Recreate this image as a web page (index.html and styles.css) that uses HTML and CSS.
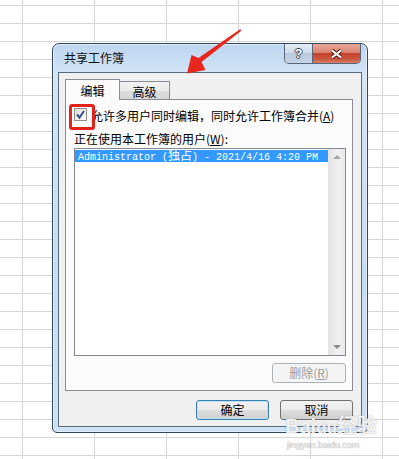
FILE: index.html
```html
<!DOCTYPE html>
<html lang="zh-CN">
  <head>
    <meta charset="UTF-8" />
    <meta name="viewport" content="width=device-width, initial-scale=1.0" />
    <title>共享工作簿</title>
    <link rel="stylesheet" href="styles.css">
  </head>
  <body>
    <div class="dialog">
      <div class="titlebar">
        <span class="title">共享工作簿</span>
        <div class="caption-btns">
          <span class="cap-btn help">?</span>
          <span class="cap-btn close">
            <svg width="13" height="10" viewBox="0 0 13 10">
              <path d="M2 1.5 L11 8.5 M11 1.5 L2 8.5" stroke="#4a1d16" stroke-width="4" fill="none" />
              <path d="M2 1.5 L11 8.5 M11 1.5 L2 8.5" stroke="#fff" stroke-width="2.2" fill="none" />
            </svg>
          </span>
        </div>
      </div>
      <div class="client">
        <ul class="tabs">
          <li class="tab active">编辑</li>
          <li class="tab">高级</li>
        </ul>
        <div class="panel">
          <div class="check-row">
            <span class="checkbox">
              <svg width="11" height="11" viewBox="0 0 11 11">
                <path d="M2 5.5 L4.5 8.5 L9 2" stroke="#3b4f8a" stroke-width="2" fill="none" />
              </svg>
            </span>
            <span class="check-label">允许多用户同时编辑，同时允许工作簿合并(<u>A</u>)</span>
            <span class="mark"></span>
          </div>
          <div class="list-label">正在使用本工作簿的用户(<u>W</u>):</div>
          <div class="listbox">
            <div class="rows">
              <div class="row selected">Administrator (<span class="cjk">独占</span>) - 2021/4/16 4:20 PM</div>
            </div>
            <div class="scrollbar">
              <span class="arrow up"></span>
              <span class="arrow down"></span>
            </div>
          </div>
          <div class="panel-actions">
            <button class="btn" disabled>删除(<u>R</u>)</button>
          </div>
        </div>
        <div class="actions">
          <button class="btn default">确定</button>
          <button class="btn">取消</button>
        </div>
      </div>
    </div>

    <svg class="note-arrow" width="70" height="60" viewBox="180 20 70 60">
      <polygon points="240.1,29.2 241.3,30.8 201.5,62 205.5,70 187,73.5 191.5,55 198.5,58" fill="#e8261e" />
    </svg>

    <div class="watermark">
      <span class="wm-logo">Bai<span class="paw">du</span>经验</span>
      <span class="wm-url">jingyan.baidu.com</span>
    </div>
  </body>
</html>
```

FILE: styles.css
```css
ul {
  margin: 0;
  padding: 0;
  list-style: none;
}
body {
  margin: 0;
  padding: 43px 0 0 52px;
  height: 459px;
  box-sizing: border-box;
  overflow: hidden;
  position: relative;
  font-family: "Noto Sans CJK SC", sans-serif;
  font-size: 12px;
  color: #000;
  background-color: #fff;
  background-image: linear-gradient(to right, #d6d6d6 1px, transparent 1px),
    linear-gradient(#d6d6d6 1px, transparent 1px);
  background-size: 72px 18px;
  background-position: 22px 5px;
}
u {
  text-decoration: underline;
}

/* window frame */
.dialog {
  width: 316px;
  height: 390px;
  box-sizing: border-box;
  border: 1px solid #34465a;
  border-radius: 7px 7px 5px 5px;
  padding: 0 5px 5px;
  display: flex;
  flex-direction: column;
  background: linear-gradient(#bcd5ef, #d3e4f6 30px, #c6dcf2 60%, #cde0f5);
  box-shadow: inset 0 0 0 1px #e3eef9;
}
.titlebar {
  height: 28px;
  display: flex;
  align-items: flex-start;
}
.titlebar .title {
  padding-left: 6px;
  line-height: 28px;
  font-size: 12px;
  color: #111;
}
.caption-btns {
  margin-left: auto;
  margin-right: 1px;
  display: flex;
  height: 19px;
  border: 1px solid #58667a;
  border-top: none;
  border-radius: 0 0 5px 5px;
  overflow: hidden;
}
.cap-btn {
  display: flex;
  align-items: center;
  justify-content: center;
}
.cap-btn.help {
  width: 27px;
  border-right: 1px solid #58667a;
  background: linear-gradient(#e6eef7, #d0dcea 45%, #b9c9dc 50%, #c6d4e4);
  font: bold 13px "Liberation Sans", sans-serif;
  color: #fff;
  text-shadow: 1px 0 #3a4556, -1px 0 #3a4556, 0 1px #3a4556, 0 -1px #3a4556;
}
.cap-btn.close {
  width: 47px;
  background: linear-gradient(#e9a99b, #d9826f 45%, #c5432f 50%, #c9563f 80%, #d77f69);
}

/* client area */
.client {
  flex: 1;
  border: 1px solid #5b6b7e;
  background: #f0f0f0;
  padding: 6px 8px 0 6px;
}
.tabs {
  display: flex;
  align-items: flex-end;
  height: 21px;
  position: relative;
  z-index: 1;
  margin-bottom: -1px;
}
.tab {
  box-sizing: border-box;
  border: 1px solid #898c95;
  border-bottom: none;
  text-align: center;
}
.tab.active {
  width: 55px;
  height: 21px;
  line-height: 21px;
  background: #fbfbfb;
}
.tab:not(.active) {
  width: 50px;
  height: 18px;
  line-height: 19px;
  margin-bottom: 1px;
  border-left: none;
  background: linear-gradient(#f2f2f2, #ebebeb 50%, #dddddd 51%, #d6d6d6);
}
.panel {
  width: 288px;
  height: 292px;
  box-sizing: border-box;
  border: 1px solid #898c95;
  background: #fbfbfb;
  padding: 7px 6px 0 7px;
}
.check-row {
  position: relative;
  display: flex;
  align-items: center;
  height: 14px;
  margin-left: 1px;
}
.checkbox {
  width: 13px;
  height: 13px;
  box-sizing: border-box;
  border: 1px solid #8e8f8f;
  background: linear-gradient(135deg, #dcdcdc, #fefefe);
  display: flex;
  align-items: center;
  justify-content: center;
}
.check-label {
  margin-left: 4px;
  line-height: 14px;
  margin-top: 3px;
}
.mark {
  position: absolute;
  left: -5px;
  top: -3px;
  width: 26px;
  height: 26px;
  box-sizing: border-box;
  border: 3px solid #e2231c;
  border-radius: 3px;
}
.list-label {
  margin: 11px 0 0 1px;
  line-height: 14px;
}

/* list of users */
.listbox {
  margin: 2px 0 0 1px;
  width: 272px;
  height: 208px;
  box-sizing: border-box;
  border: 1px solid #828790;
  background: #fff;
  display: flex;
}
.rows {
  flex: 1;
  padding-top: 1px;
}
.row {
  height: 12px;
  padding-left: 3px;
  font: 10px/12px "Liberation Mono", monospace;
  white-space: nowrap;
}
.row .cjk {
  font-family: "Noto Sans CJK SC", sans-serif;
  font-size: 12px;
  line-height: 10px;
}
.row.selected {
  background: #3399ff;
  color: #fff;
}
.scrollbar {
  width: 17px;
  display: flex;
  flex-direction: column;
  justify-content: space-between;
  align-items: center;
  background: linear-gradient(to right, #e4e4e4, #f0f0f0 60%, #e9e9e9);
  padding: 6px 0;
}
.arrow {
  width: 0;
  height: 0;
  border-left: 4px solid transparent;
  border-right: 4px solid transparent;
}
.arrow.up {
  border-bottom: 4px solid #a8a8a8;
}
.arrow.down {
  border-top: 4px solid #8a8a8a;
}
.panel-actions {
  display: flex;
  justify-content: flex-end;
  margin-top: 7px;
}

/* buttons */
.btn {
  width: 73px;
  height: 20px;
  box-sizing: border-box;
  border: 1px solid #707070;
  border-radius: 3px;
  padding: 0;
  font-family: "Noto Sans CJK SC", sans-serif;
  font-size: 12px;
  line-height: 18px;
  color: #000;
  background: linear-gradient(#f2f2f2, #ebebeb 50%, #dddddd 51%, #cfcfcf);
}
.btn:disabled {
  width: 74px;
  border-color: #adb2b5;
  background: #f4f4f4;
  color: #9c9c9c;
}
.btn.default {
  border-color: #3c7fb1;
  box-shadow: inset 0 0 0 1px #b8e2f8;
}
.actions {
  display: flex;
  justify-content: flex-end;
  gap: 11px;
  margin-top: 9px;
}

/* annotations */
.note-arrow {
  position: absolute;
  left: 180px;
  top: 20px;
}
.watermark {
  position: absolute;
  left: 285px;
  top: 414px;
  display: flex;
  flex-direction: column;
  color: rgba(255, 255, 255, 0.9);
  text-shadow: 0 0 1px rgba(90, 90, 90, 0.6);
}
.wm-logo {
  font: bold 20px/24px "Liberation Sans", sans-serif;
  white-space: nowrap;
}
.wm-logo .paw {
  font-size: 17px;
}
.wm-url {
  font: 9px/10px "Liberation Sans", sans-serif;
  color: rgba(235, 235, 235, 0.9);
  margin-left: 2px;
}
```
